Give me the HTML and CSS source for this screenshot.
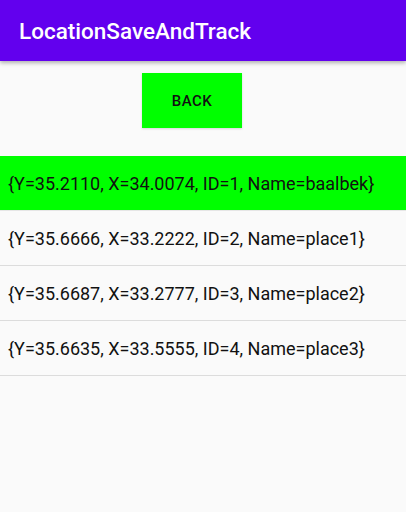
FILE: index.html
```html
<!DOCTYPE html>
<html>
<head>
<meta charset="utf-8">
<link rel="stylesheet" href="styles.css">
</head>
<body>
<div class="appbar"><span class="title">LocationSaveAndTrack</span></div>
<div class="content">
  <div class="btnrow"><button class="back">BACK</button></div>
  <ul class="list">
    <li class="item selected">{Y=35.2110, X=34.0074, ID=1, Name=baalbek}</li>
    <li class="item">{Y=35.6666, X=33.2222, ID=2, Name=place1}</li>
    <li class="item">{Y=35.6687, X=33.2777, ID=3, Name=place2}</li>
    <li class="item">{Y=35.6635, X=33.5555, ID=4, Name=place3}</li>
  </ul>
</div>
</body>
</html>
```
FILE: styles.css
```css
html, body {
  margin: 0;
  padding: 0;
  background: #fafafa;
  font-family: Roboto, "Noto Sans", sans-serif;
  width: 406px;
  height: 512px;
  overflow: hidden;
}
.appbar {
  height: 61px;
  background: #6200ee;
  display: flex;
  align-items: center;
  padding-left: 19px;
  box-shadow: 0 2px 4px rgba(0,0,0,0.3);
  position: relative;
  z-index: 1;
}
.title {
  color: #fff;
  font-size: 22.5px;
  font-weight: 500;
}
.content {
  display: flex;
  flex-direction: column;
}
.btnrow {
  padding-left: 142px;
  padding-top: 12px;
}
.back {
  width: 100px;
  height: 55px;
  border: none;
  background: #00ff00;
  color: #111;
  font-family: Roboto, sans-serif;
  font-size: 15px;
  font-weight: 500;
  letter-spacing: 0.5px;
  padding: 0;
  margin: 0;
  box-shadow: 0 1px 2px rgba(0,0,0,0.15);
}
.list {
  list-style: none;
  margin: 28px 0 0 0;
  padding: 0;
}
.item {
  height: 55px;
  display: flex;
  align-items: center;
  padding-left: 8px;
  font-size: 18px;
  color: #111;
  border-bottom: 1px solid #dcdcdc;
  box-sizing: border-box;
}
.item.selected {
  background: #00ff00;
  border-bottom-color: #e6e6e6;
}
```
